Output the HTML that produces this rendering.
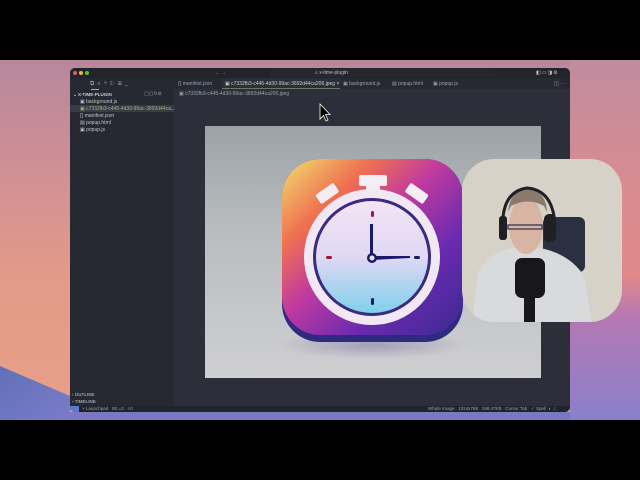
<!DOCTYPE html>
<html><head><style>
*{margin:0;padding:0;box-sizing:border-box}
body{width:640px;height:480px;background:#000;position:relative;overflow:hidden;font-family:"Liberation Sans",sans-serif}
.desk{position:absolute;left:0;top:60px;width:640px;height:360px;overflow:hidden;
background:linear-gradient(180deg,#b8879c 0%,#cf8f95 30%,#e39a88 60%,#e8a088 100%)}
.t{position:absolute;color:#9aa0ad;font-size:5px;white-space:nowrap;line-height:6px}
</style></head><body>
<div class="desk">
<svg width="640" height="360" style="position:absolute;left:0;top:0">
<defs>
<linearGradient id="rg" x1="0" y1="0" x2="0" y2="1"><stop offset="0" stop-color="#c08ca0"/><stop offset="0.35" stop-color="#d88c90"/><stop offset="0.6" stop-color="#e0888a"/><stop offset="0.72" stop-color="#b478b4"/><stop offset="1" stop-color="#8a80cc"/></linearGradient>
<linearGradient id="bl" x1="0" y1="0" x2="1" y2="1"><stop offset="0" stop-color="#6070b8"/><stop offset="1" stop-color="#7a7cc8"/></linearGradient>
</defs>
<rect x="570" y="0" width="70" height="360" fill="url(#rg)"/>
<path d="M0 306 L70 336 L70 360 L0 360Z" fill="url(#bl)"/>
<path d="M70 352 L570 352 L570 360 L70 360Z" fill="#7a78c0"/>
</svg>
</div>
<!-- window -->
<div style="position:absolute;left:70px;top:68px;width:500px;height:344px;background:#2c2f3a;border-radius:5px;overflow:hidden">
 <div style="position:absolute;left:0;top:0;width:500px;height:10px;background:#22242c"></div>
 <div style="position:absolute;left:3px;top:3px;width:4px;height:4px;border-radius:50%;background:#ee5a52"></div>
 <div style="position:absolute;left:9px;top:3px;width:4px;height:4px;border-radius:50%;background:#e8b83a"></div>
 <div style="position:absolute;left:15px;top:3px;width:4px;height:4px;border-radius:50%;background:#58c040"></div>
 <div class="t" style="left:145px;top:2px">← →</div>
 <div style="position:absolute;left:200px;top:1px;width:225px;height:8px;background:#26282f;border-radius:2px"></div>
 <div class="t" style="left:245px;top:2px;color:#b8bcc6">⌕ x-time-plugin</div>
 <div class="t" style="left:466px;top:2px;color:#c0c4cc;letter-spacing:1px">◧▭◨⚙</div>
 <div style="position:absolute;left:0;top:10px;width:104px;height:328px;background:#262931"></div>
 <div class="t" style="left:20px;top:13px;font-size:6px;letter-spacing:3px">⧉⌕⑂▷⊞⌄</div>
 <div style="position:absolute;left:21px;top:21px;width:8px;height:1px;background:#aaa"></div>
 <div class="t" style="left:3px;top:24px;color:#c8ccd4;font-weight:bold;font-size:4.5px">⌄ X-TIME-PLUGIN</div>
 <div class="t" style="left:74px;top:23px">▢▢↻⊘</div>
 <div class="t" style="left:10px;top:31px;color:#c0c4cc">▣ background.js</div>
 <div style="position:absolute;left:0;top:37px;width:104px;height:7px;background:#383c48"></div>
 <div class="t" style="left:10px;top:38px;color:#9fb87a">▣ c7332fb3-c445-4d30-99ac-3892d44ca...</div>
 <div class="t" style="left:10px;top:45px;color:#c0c4cc">{} manifest.json</div>
 <div class="t" style="left:10px;top:52px;color:#c0c4cc">▤ popup.html</div>
 <div class="t" style="left:10px;top:59px;color:#c0c4cc">▣ popup.js</div>
 <div class="t" style="left:2px;top:324px;font-weight:bold;font-size:4.5px">› OUTLINE</div>
 <div class="t" style="left:2px;top:331px;font-weight:bold;font-size:4.5px">› TIMELINE</div>
 <div style="position:absolute;left:104px;top:10px;width:396px;height:11px;background:#262931"></div>
 <div class="t" style="left:108px;top:13px">{} manifest.json</div>
 <div style="position:absolute;left:152px;top:10px;width:118px;height:11px;background:#2c2f3a;border-bottom:1px solid #6a7a5a"></div>
 <div class="t" style="left:155px;top:13px;color:#c8ccd4">▣ c7332fb3-c445-4d30-99ac-3892d44ca206.jpeg ×</div>
 <div class="t" style="left:273px;top:13px">▣ background.js</div>
 <div class="t" style="left:322px;top:13px">▤ popup.html</div>
 <div class="t" style="left:363px;top:13px">▣ popup.js</div>
 <div class="t" style="left:484px;top:13px">◫ ⋯</div>
 <div class="t" style="left:109px;top:23px">▣ c7332fb3-c445-4d30-99ac-3892d44ca206.jpeg</div>
 <div style="position:absolute;left:0;top:338px;width:500px;height:6px;background:#22242c"></div>
 <div style="position:absolute;left:0;top:338px;width:9px;height:6px;background:#5a7ad0"></div>
 <div class="t" style="left:12px;top:338px;font-size:4.5px">⑂ Launchpad &nbsp; ⊗0 ⚠0 &nbsp; ⚲0</div>
 <div class="t" style="left:358px;top:338px;font-size:4.5px">Whole Image &nbsp; 1024x768 &nbsp; 198.47KB &nbsp; Cursor Tab &nbsp; ✓ Spell &nbsp;◐ ♫</div>
</div>
<div style="position:absolute;left:205px;top:126px;width:336px;height:252px;background:linear-gradient(180deg,#9ca2a6 0%,#b8bcbf 40%,#cfcfd2 100%)"></div>
<svg width="640" height="480" style="position:absolute;left:0;top:0">
<defs>
<linearGradient id="ig" x1="0" y1="0" x2="1" y2="1"><stop offset="0" stop-color="#f0e070"/><stop offset="0.25" stop-color="#f07050"/><stop offset="0.45" stop-color="#c03aa0"/><stop offset="0.7" stop-color="#6a2ab0"/><stop offset="1" stop-color="#3a2a90"/></linearGradient>
<linearGradient id="fg" x1="0" y1="0" x2="0" y2="1"><stop offset="0" stop-color="#f4e4f4"/><stop offset="0.5" stop-color="#e0d8f4"/><stop offset="1" stop-color="#80d0ec"/></linearGradient>
<clipPath id="cam"><rect x="462" y="159" width="160" height="163" rx="32"/></clipPath>
<radialGradient id="sh" cx="0.5" cy="0.5" r="0.5"><stop offset="0" stop-color="#8070a0" stop-opacity="0.5"/><stop offset="1" stop-color="#8070a0" stop-opacity="0"/></radialGradient>
</defs>
<ellipse cx="372" cy="345" rx="95" ry="14" fill="url(#sh)"/>
<rect x="282" y="159" width="181" height="183" rx="38" fill="#2e2a80"/>
<rect x="282" y="159" width="181" height="176" rx="38" fill="url(#ig)"/>
<g fill="#f4eef4">
<rect x="359" y="175" width="28" height="11" rx="2"/>
<rect x="366" y="184" width="14" height="10"/>
<rect x="316" y="188" width="22" height="11" rx="2" transform="rotate(-35 327 193)"/>
<rect x="406" y="188" width="22" height="11" rx="2" transform="rotate(35 417 193)"/>
</g>
<circle cx="372" cy="257" r="68" fill="#f2e8f4"/>
<circle cx="372" cy="257" r="59" fill="#3a2a80"/>
<circle cx="372" cy="257" r="56" fill="url(#fg)"/>
<g fill="#9a1a3a"><rect x="371" y="211" width="3" height="6" rx="1.5"/><rect x="326" y="256" width="6" height="3" rx="1.5"/></g>
<g fill="#1a1a6a"><rect x="371" y="298" width="3" height="7" rx="1.5"/><rect x="414" y="256" width="6" height="3" rx="1.5"/>
<rect x="370" y="224" width="3" height="32"/><path d="M372 256 L410 256 L410 258 L372 260Z"/></g>
<circle cx="372" cy="258" r="5" fill="#1a1a6a"/><circle cx="372" cy="258" r="2.5" fill="#e8e4f4"/>
<path d="M320 104 L320 119 L323.5 115.5 L326 121 L328 120 L325.5 114.5 L330 114.5Z" fill="#000" stroke="#fff" stroke-width="0.8"/>
<g clip-path="url(#cam)">
<rect x="462" y="159" width="160" height="163" fill="#d6d2c8"/>
<rect x="543" y="217" width="42" height="55" rx="6" fill="#2a3040"/>
<path d="M472 322 L478 272 Q490 252 512 248 L540 248 Q570 254 584 276 L592 322Z" fill="#d8dadc"/>
<ellipse cx="526" cy="226" rx="17" ry="28" fill="#d8b4a4"/>
<path d="M508 212 Q510 190 527 189 Q546 190 547 212 L544 206 Q528 197 511 206Z" fill="#8a7a6a"/>
<path d="M503 232 Q500 192 527 188 Q553 190 555 225" fill="none" stroke="#202024" stroke-width="3"/>
<rect x="499" y="216" width="8" height="24" rx="3" fill="#202024"/>
<rect x="544" y="214" width="12" height="28" rx="5" fill="#202024"/>
<rect x="508" y="225" width="34" height="4" fill="none" stroke="#2a2a4a" stroke-width="1.2"/>
<rect x="515" y="258" width="30" height="40" rx="7" fill="#18181c"/>
<rect x="524" y="296" width="11" height="26" fill="#18181c"/>
</g>
</svg>
</body></html>
